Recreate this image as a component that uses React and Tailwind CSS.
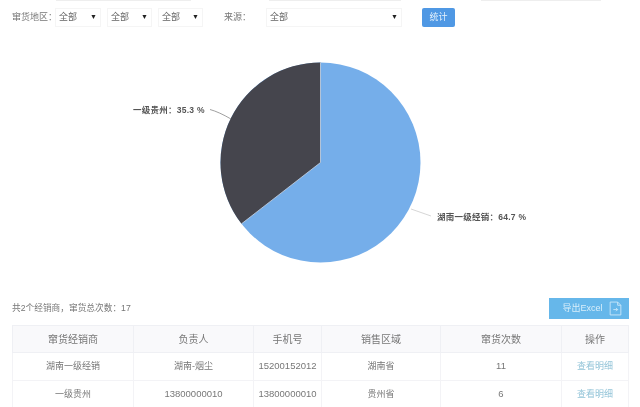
import React from 'react';

const font = { fontFamily: '"Liberation Sans", "Noto Sans CJK SC", sans-serif' };

const SelectBox = ({ width, gap }) => (
    <div className={`flex h-[19px] items-center justify-between pl-[3px] pr-[3px] border border-[#f5f5f5] text-[9px] text-[#666] ${width} ${gap}`}>
        <span>全部</span>
        <span className="text-[7px] text-[#222]">▼</span>
    </div>
);

const PieChart = () => (
    <svg width="640" height="272" viewBox="0 0 640 272" className="block">
        <circle cx="320.5" cy="162.5" r="100" fill="#75aeea" />
        {/* 35.3% slice, from the top going counter-clockwise */}
        <path d="M320.5 162.5 L320.5 62.5 A100 100 0 0 0 241.5 223.8 Z" fill="#45454d" />
        <path d="M320.5 62.5 L320.5 162.5 L241.5 223.8" fill="none" stroke="#c9d6e6" strokeWidth="0.8" />
        <path d="M210 109.5 Q219 112 231 119" fill="none" stroke="#888" strokeWidth="0.8" />
        <path d="M411 209 L431 216" fill="none" stroke="#ccc" strokeWidth="0.8" />
        <text x="133" y="113" fontSize="8.5" letterSpacing="0.25" fill="#555" fontWeight="600">一级贵州：35.3 %</text>
        <text x="437" y="220" fontSize="8.5" letterSpacing="0.25" fill="#555" fontWeight="600">湖南一级经销：64.7 %</text>
    </svg>
);

const rows = [
    ['湖南一级经销', '湖南-烟尘', '15200152012', '湖南省', '11'],
    ['一级贵州', '13800000010', '13800000010', '贵州省', '6'],
];

export default function App() {
    return (
        <div className="relative w-[640px] h-[407px] overflow-hidden bg-white blur-[0.45px]" style={font}>
            <div className="flex h-[1px]">
                <div className="ml-[56px] w-[135px] bg-[#eee]"></div>
                <div className="ml-[78px] w-[132px] bg-[#eee]"></div>
                <div className="ml-[80px] w-[120px] bg-[#eee]"></div>
            </div>

            <div className="flex items-center h-[19px] mt-[7px] pl-[12px]">
                <span className="w-[43px] text-[9px] text-[#777] whitespace-nowrap">窜货地区：</span>
                <SelectBox width="w-[46px]" gap="mr-[6px]" />
                <SelectBox width="w-[45px]" gap="mr-[6px]" />
                <SelectBox width="w-[45px]" gap="mr-[21px]" />
                <span className="w-[42px] text-[9px] text-[#777]">来源：</span>
                <SelectBox width="w-[136px]" gap="mr-[20px]" />
                <button className="w-[33px] h-[19px] rounded-[2px] bg-[#4f98e4] text-[9px] text-[#e6f2fc]">统计</button>
            </div>

            <div className="-mt-[27px]">
                <PieChart />
            </div>

            <div className="flex items-center justify-between h-[21px] mt-[26px] pl-[12px] pr-[11px]">
                <span className="text-[8.7px] text-[#777]">共2个经销商，窜货总次数：17</span>
                <button className="flex items-center justify-center gap-[6px] w-[80px] h-[21px] pl-[6px] bg-[#66b7ea] text-[9px] text-[#d8eefa]">
                    导出Excel
                    <svg width="13" height="15" viewBox="0 0 12 14" fill="none" stroke="#cfeafa" strokeWidth="0.8">
                        <path d="M1 1h7l3 3v9H1z" />
                        <path d="M8 1v3h3" />
                        <path d="M4 8h4M6.5 6.5 8 8 6.5 9.5" />
                    </svg>
                </button>
            </div>

            <table className="w-[616px] ml-[12px] mt-[6px] table-fixed border-collapse text-[9px] text-[#777] text-center">
                <colgroup>
                    <col className="w-[121px]" />
                    <col className="w-[120px]" />
                    <col className="w-[68px]" />
                    <col className="w-[119px]" />
                    <col className="w-[121px]" />
                    <col className="w-[67px]" />
                </colgroup>
                <thead>
                    <tr className="h-[27px] bg-[#f9f9fb] text-[10px]">
                        {['窜货经销商', '负责人', '手机号', '销售区域', '窜货次数', '操作'].map((title) => (
                            <th key={title} className="border border-[#eff0f4] font-normal">{title}</th>
                        ))}
                    </tr>
                </thead>
                <tbody>
                    {rows.map((row) => (
                        <tr key={row[0]} className="h-[28px]">
                            {row.map((cell, i) => (
                                <td key={i} className={`border border-[#f3f3f6] ${i === 2 || i === 4 || (i === 1 && /^\d/.test(cell)) ? 'text-[9.5px]' : ''}`}>{cell}</td>
                            ))}
                            <td className="border border-[#f3f3f6] text-[#93c4d8]">查看明细</td>
                        </tr>
                    ))}
                </tbody>
            </table>
        </div>
    );
}
